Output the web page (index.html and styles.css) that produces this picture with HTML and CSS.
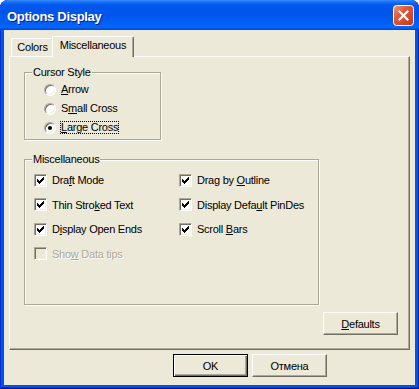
FILE: index.html
```html
<!DOCTYPE html>
<html lang="en">
<head>
  <meta charset="UTF-8" />
  <title>Options Display</title>
  <link rel="stylesheet" href="styles.css">
</head>
<body>

  <div class="window">
    <div class="titlebar">
      <span class="title">Options Display</span>
      <button class="close" title="Close">
        <svg width="21" height="21" viewBox="0 0 21 21">
          <defs>
            <linearGradient id="closeFill" x1="0" y1="0" x2="1" y2="1">
              <stop offset="0" stop-color="#F2A085"/>
              <stop offset="0.35" stop-color="#E25B3C"/>
              <stop offset="1" stop-color="#C4381C"/>
            </linearGradient>
          </defs>
          <rect x="0.5" y="0.5" width="20" height="20" rx="3" fill="url(#closeFill)" stroke="#fff"/>
          <path d="M6.5 6.5l8 8M14.5 6.5l-8 8" stroke="#fff" stroke-width="2.2" stroke-linecap="square"/>
        </svg>
      </button>
    </div>

    <div class="client">
      <div class="tabs">
        <div class="tab">Colors</div>
        <div class="tab active">Miscellaneous</div>
      </div>

      <div class="panel">
        <div class="group cursor-group">
          <span class="legend">Cursor Style</span>
          <label class="option"><span class="radio"></span><span class="caption"><u>A</u>rrow</span></label>
          <label class="option"><span class="radio"></span><span class="caption">S<u>m</u>all Cross</span></label>
          <label class="option"><span class="radio"><span class="dot"></span></span><span class="caption focus"><u>L</u>arge Cross</span></label>
        </div>

        <div class="group misc-group">
          <span class="legend">Miscellaneous</span>
          <div class="checks">
            <label class="check-row"><span class="check on"></span><span>Dra<u>f</u>t Mode</span></label>
            <label class="check-row"><span class="check on"></span><span>Drag by <u>O</u>utline</span></label>
            <label class="check-row"><span class="check on"></span><span>Thin Stro<u>k</u>ed Text</span></label>
            <label class="check-row"><span class="check on"></span><span>Display Defa<u>u</u>lt PinDes</span></label>
            <label class="check-row"><span class="check on"></span><span>D<u>i</u>splay Open Ends</span></label>
            <label class="check-row"><span class="check on"></span><span>Scroll <u>B</u>ars</span></label>
            <label class="check-row disabled"><span class="check"></span><span>Sho<u>w</u> Data tips</span></label>
          </div>
        </div>

        <button class="btn defaults"><u>D</u>efaults</button>
      </div>

      <div class="footer">
        <button class="btn default">OK</button>
        <button class="btn">Отмена</button>
      </div>
    </div>
  </div>

</body>
</html>
```

FILE: styles.css
```css
* {
  margin: 0;
  padding: 0;
  box-sizing: border-box;
}
body {
  background: #fff;
  font-family: 'Liberation Sans', Arial, sans-serif;
  font-size: 11px;
  letter-spacing: -0.25px;
  color: #000;
}
u {
  text-decoration: underline;
  text-underline-offset: 1px;
}

/* window frame */
.window {
  width: 419px;
  height: 389px;
  display: flex;
  flex-direction: column;
  padding: 0 4px 4px;
  background: #0055E5;
  border-radius: 8px 8px 0 0;
  box-shadow: inset 1px 0 #0831D9, inset -1px 0 #0022B5, inset 0 -1px #00138C, inset 0 -2px #0831D9;
  overflow: hidden;
}
.titlebar {
  height: 30px;
  margin: 0 -4px;
  padding: 0 5px 0 7px;
  display: flex;
  align-items: center;
  justify-content: space-between;
  background: linear-gradient(to bottom, #3A8DFF 0, #1670F6 2px, #0058EE 5px, #0055EB 14px, #0060F6 24px, #0568FC 27px, #0150E4 29px, #0042D0 30px);
  border-radius: 8px 8px 0 0;
}
.title {
  color: #fff;
  font-weight: bold;
  font-size: 13px;
  letter-spacing: -0.3px;
  text-shadow: 1px 1px #0A1E8C;
  margin-top: 2px;
}
.close {
  display: flex;
  border: 0;
  background: none;
}

/* client area */
.client {
  flex: 1;
  background: #ECE9D8;
  padding: 6px 5px 0;
}
.tabs {
  display: flex;
  align-items: flex-end;
  height: 20px;
  padding-left: 2px;
}
.tab {
  width: 43px;
  height: 18px;
  padding-top: 2px;
  text-align: center;
  line-height: 13px;
  border: 1px solid #fff;
  border-bottom: 0;
  border-right-color: #716F64;
  border-radius: 2px 2px 0 0;
  box-shadow: inset -1px 0 #ACA899;
}
.tab.active {
  width: 82px;
  height: 21px;
  margin-left: -2px;
  margin-bottom: -1px;
  padding-top: 2px;
  position: relative;
  z-index: 1;
  background: #ECE9D8;
}
.panel {
  height: 294px;
  display: flex;
  flex-direction: column;
  align-items: flex-start;
  padding: 15px 0 0 14px;
  border: 1px solid #fff;
  border-right-color: #716F64;
  border-bottom-color: #716F64;
  box-shadow: inset -1px -1px #ACA899;
}

/* group boxes */
.group {
  position: relative;
  border: 1px solid #ACA899;
  box-shadow: inset 1px 1px #fff, 1px 1px #fff;
}
.legend {
  position: absolute;
  top: -7px;
  left: 7px;
  padding: 0 1px;
  line-height: 13px;
  background: #ECE9D8;
}
.cursor-group {
  width: 137px;
  height: 68px;
  padding: 7px 0 0 19px;
}
.option {
  display: flex;
  align-items: center;
  gap: 4px;
  height: 19px;
}
.caption {
  border: 1px dotted transparent;
  line-height: 11px;
}
.caption.focus {
  border-color: #000;
}
.radio {
  width: 12px;
  height: 12px;
  display: flex;
  align-items: center;
  justify-content: center;
  border-radius: 50%;
  border: 1px solid;
  border-color: #ACA899 #fff #fff #ACA899;
  box-shadow: inset 1px 1px #716F64, inset -1px -1px #F1EFE2;
  background: #fff;
}
.dot {
  width: 4px;
  height: 4px;
  border-radius: 50%;
  background: #000;
}
.misc-group {
  width: 295px;
  height: 146px;
  margin-top: 19px;
  padding: 8px 0 0 9px;
}
.checks {
  display: grid;
  grid-template-columns: 145px auto;
  grid-auto-rows: 24.5px;
}
.check-row {
  display: flex;
  align-items: center;
  gap: 5px;
}
.check {
  width: 13px;
  height: 13px;
  border: 1px solid;
  border-color: #ACA899 #fff #fff #ACA899;
  box-shadow: inset 1px 1px #716F64, inset -1px -1px #F1EFE2;
  background: #fff;
}
.check.on {
  background: #fff url("data:image/svg+xml;utf8,<svg xmlns='http://www.w3.org/2000/svg' width='7' height='7' shape-rendering='crispEdges'><path d='M0 2h1v3h-1zM1 3h1v3h-1zM2 4h1v3h-1zM3 3h1v3h-1zM4 2h1v3h-1zM5 1h1v3h-1zM6 0h1v3h-1z'/></svg>") no-repeat 2px 2px;
}
.check-row.disabled {
  color: #ACA899;
  text-shadow: 1px 1px #fff;
}
.check-row.disabled .check {
  background: #ECE9D8;
}

/* buttons */
.btn {
  width: 75px;
  height: 23px;
  font: inherit;
  letter-spacing: inherit;
  color: #000;
  background: #ECE9D8;
  border: 1px solid;
  border-color: #fff #716F64 #716F64 #fff;
  box-shadow: inset -1px -1px #ACA899;
}
.btn.default {
  border-color: #000;
  box-shadow: inset 1px 1px #fff, inset -1px -1px #716F64, inset -2px -2px #ACA899;
}
.defaults {
  align-self: flex-end;
  margin: 7px 11px 0 0;
}
.footer {
  display: flex;
  gap: 4px;
  margin-top: 4px;
  padding-left: 164px;
}
```
